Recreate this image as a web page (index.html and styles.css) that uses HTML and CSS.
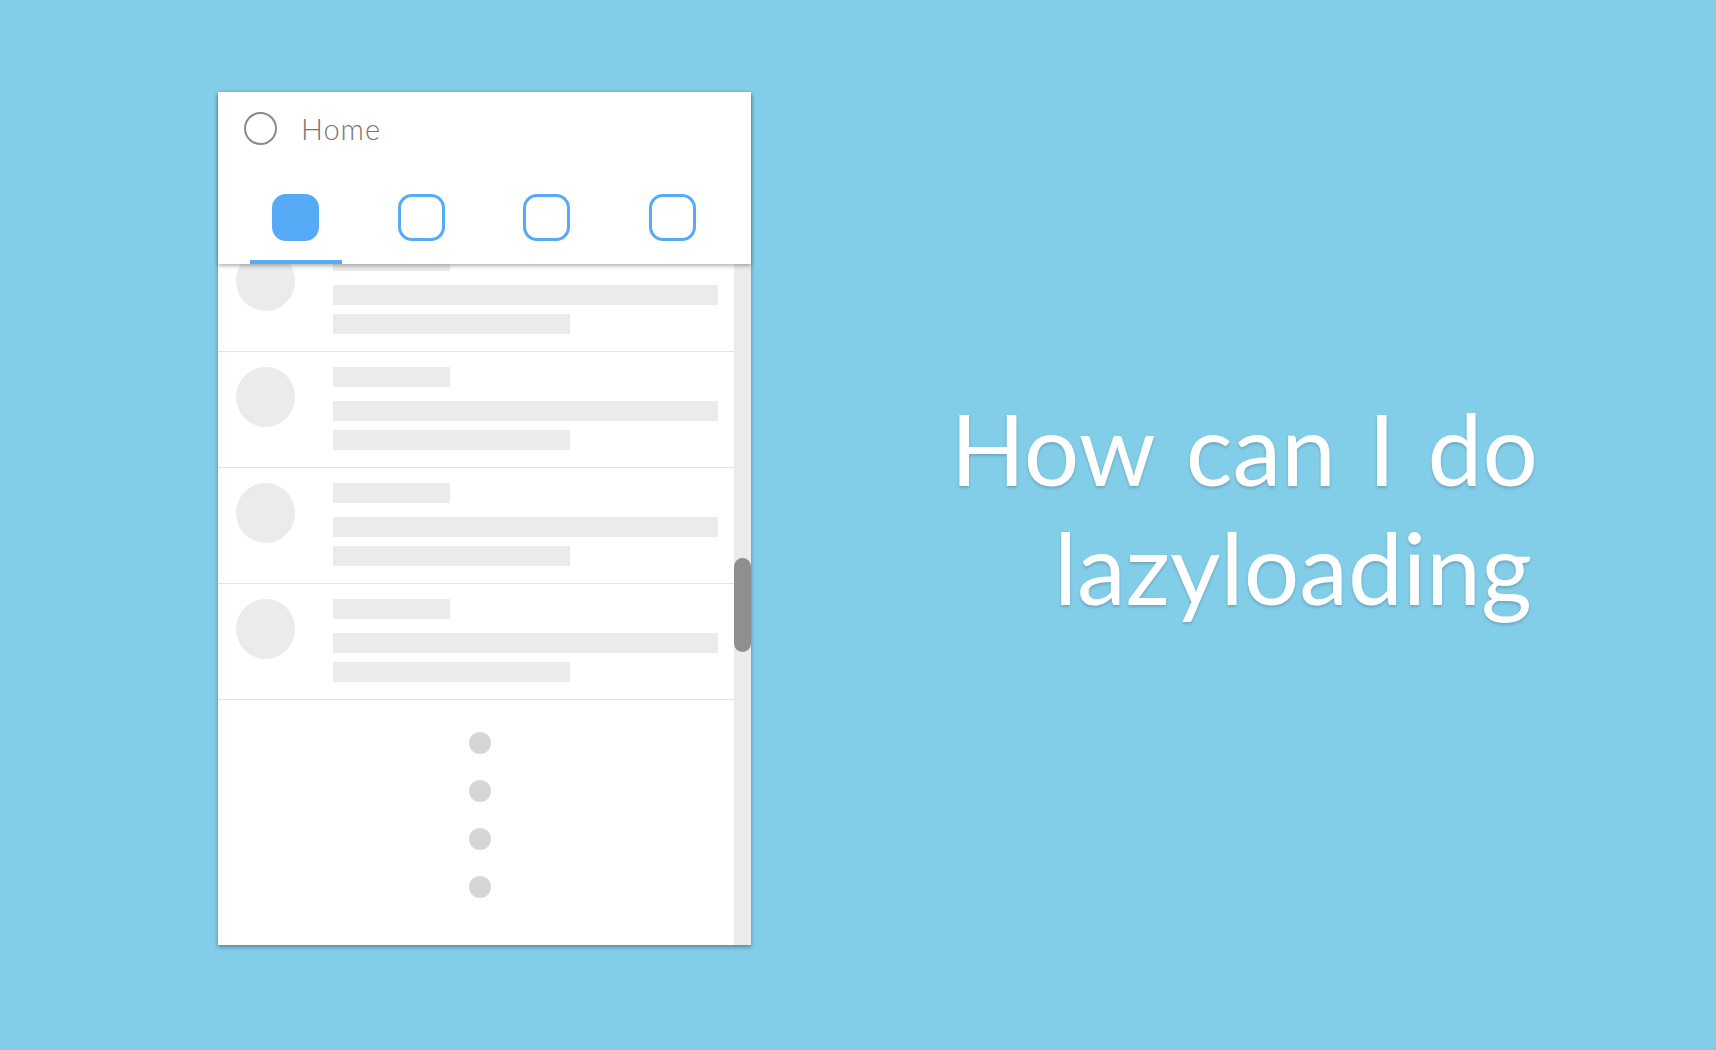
FILE: index.html
```html
<!DOCTYPE html>
<html lang="en">
<head>
    <meta charset="UTF-8">
    <meta name="viewport" content="width=device-width, initial-scale=1.0">
    <title>How can I do lazyloading</title>
    <link rel="stylesheet" href="styles.css">
</head>
<body>
    <div class="phone">
        <header class="appbar">
            <div class="title-row">
                <span class="home-icon"></span>
                <span class="title">Home</span>
            </div>
            <nav class="tabs">
                <div class="tab active"><span class="tab-icon"></span><span class="indicator"></span></div>
                <div class="tab"><span class="tab-icon"></span><span class="indicator"></span></div>
                <div class="tab"><span class="tab-icon"></span><span class="indicator"></span></div>
                <div class="tab"><span class="tab-icon"></span><span class="indicator"></span></div>
            </nav>
        </header>
        <div class="content">
            <div class="feed">
                <div class="feed-inner">
                    <div class="item">
                        <div class="avatar"></div>
                        <div class="lines">
                            <div class="line title-line"></div>
                            <div class="line full"></div>
                            <div class="line short"></div>
                        </div>
                    </div>
                    <div class="item">
                        <div class="avatar"></div>
                        <div class="lines">
                            <div class="line title-line"></div>
                            <div class="line full"></div>
                            <div class="line short"></div>
                        </div>
                    </div>
                    <div class="item">
                        <div class="avatar"></div>
                        <div class="lines">
                            <div class="line title-line"></div>
                            <div class="line full"></div>
                            <div class="line short"></div>
                        </div>
                    </div>
                    <div class="item">
                        <div class="avatar"></div>
                        <div class="lines">
                            <div class="line title-line"></div>
                            <div class="line full"></div>
                            <div class="line short"></div>
                        </div>
                    </div>
                    <div class="loader">
                        <span class="dot"></span>
                        <span class="dot"></span>
                        <span class="dot"></span>
                        <span class="dot"></span>
                    </div>
                </div>
            </div>
            <div class="scrollbar"><div class="thumb"></div></div>
        </div>
    </div>
    <h1 class="headline">
        <span class="headline-line first">How can I do</span>
        <span class="headline-line second">lazyloading</span>
    </h1>
</body>
</html>
```

FILE: styles.css
```css
body {
    margin: 0;
    padding: 92px 181px 0 218px;
    box-sizing: border-box;
    height: 1050px;
    overflow: hidden;
    display: flex;
    align-items: flex-start;
    background: #82cde8;
    font-family: Lato, "Open Sans", sans-serif;
}

.phone {
    width: 533px;
    height: 853px;
    background: #fff;
    display: flex;
    flex-direction: column;
    box-shadow: 0 2px 4px rgba(0, 0, 0, 0.35);
}

.appbar {
    position: relative;
    z-index: 1;
    height: 172px;
    flex-shrink: 0;
    background: #fff;
    box-shadow: 0 2px 4px rgba(0, 0, 0, 0.3);
    display: flex;
    flex-direction: column;
}

.title-row {
    display: flex;
    align-items: center;
    height: 33px;
    margin: 20px 0 0 26px;
}

.home-icon {
    width: 33px;
    height: 33px;
    box-sizing: border-box;
    border: 2px solid #8a8a8a;
    border-radius: 50%;
}

.title {
    margin-left: 24px;
    font-size: 29px;
    font-weight: 300;
    color: #777;
    letter-spacing: 1px;
}

.tabs {
    display: flex;
    margin-top: 49px;
    padding: 0 16px 0 15px;
}

.tab {
    flex: 1;
    display: flex;
    flex-direction: column;
    align-items: center;
}

.tab-icon {
    width: 47px;
    height: 47px;
    box-sizing: border-box;
    border: 3px solid #57aaf5;
    border-radius: 14px;
}

.tab.active .tab-icon {
    background: #57aaf5;
}

.indicator {
    width: 92px;
    height: 4px;
    margin-top: 19px;
}

.tab.active .indicator {
    background: #57aaf5;
}

.content {
    flex: 1;
    display: flex;
    min-height: 0;
}

.feed {
    flex: 1;
    overflow: hidden;
}

.feed-inner {
    margin-top: -28px;
}

.item {
    display: flex;
    align-items: flex-start;
    padding: 15px 0 17px 18px;
    border-bottom: 1px solid #e3e3e3;
}

.avatar {
    width: 59px;
    height: 60px;
    border-radius: 50%;
    background: #ebebeb;
    flex-shrink: 0;
}

.lines {
    flex: 1;
    margin-left: 38px;
    padding-right: 16px;
    display: flex;
    flex-direction: column;
}

.line {
    height: 20px;
    background: #ebebeb;
}

.title-line {
    width: 117px;
}

.line.full {
    margin-top: 14px;
}

.line.short {
    width: 237px;
    margin-top: 9px;
}

.loader {
    display: flex;
    flex-direction: column;
    align-items: center;
    gap: 26px;
    padding: 32px 0 0 7px;
}

.dot {
    width: 22px;
    height: 22px;
    border-radius: 50%;
    background: #d6d6d6;
}

.scrollbar {
    width: 17px;
    flex-shrink: 0;
    background: #ebebeb;
}

.thumb {
    height: 94px;
    margin-top: 294px;
    border-radius: 9px;
    background: #8f8f8f;
}

.headline {
    margin: 297px 0 0 auto;
    display: flex;
    flex-direction: column;
    align-items: flex-end;
    font-family: Lato, sans-serif;
    font-weight: 400;
    font-size: 98px;
    line-height: 119px;
    color: #fff;
    text-shadow: 0 2px 3px rgba(0, 0, 0, 0.18);
}

.headline-line {
    display: block;
}

.headline-line.first {
    word-spacing: 7px;
    margin-right: -3px;
}

.headline-line.second {
    margin-right: 3px;
}
```
